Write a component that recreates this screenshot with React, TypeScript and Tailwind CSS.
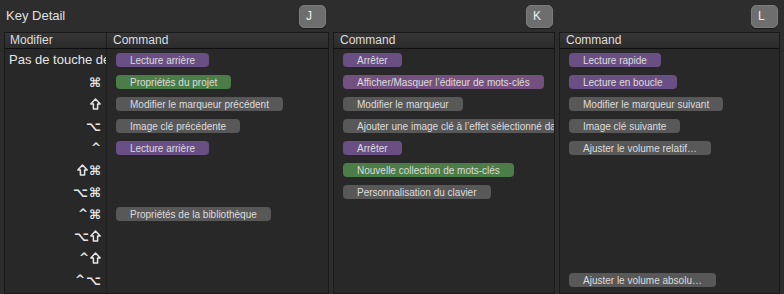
import React from 'react';

type Cmd = { row: number; label: string; color: 'purple' | 'green' | 'gray' | 'pink' };

const pillColor = {
    purple: 'bg-[#6a4f85]',
    pink: 'bg-[#74507f]',
    green: 'bg-[#4b7d48]',
    gray: 'bg-[#585858]',
};

const modifiers = ['Pas de touche de modification', '⌘', '⇧', '⌥', '^', '⇧⌘', '⌥⌘', '^⌘', '⌥⇧', '^⇧', '^⌥'];

const panels: { key: string; cmds: Cmd[]; withModifier?: boolean }[] = [
    {
        key: 'J',
        withModifier: true,
        cmds: [
            { row: 0, label: 'Lecture arrière', color: 'purple' },
            { row: 1, label: 'Propriétés du projet', color: 'green' },
            { row: 2, label: 'Modifier le marqueur précédent', color: 'gray' },
            { row: 3, label: 'Image clé précédente', color: 'gray' },
            { row: 4, label: 'Lecture arrière', color: 'purple' },
            { row: 7, label: 'Propriétés de la bibliothèque', color: 'gray' },
        ],
    },
    {
        key: 'K',
        cmds: [
            { row: 0, label: 'Arrêter', color: 'purple' },
            { row: 1, label: 'Afficher/Masquer l’éditeur de mots-clés', color: 'pink' },
            { row: 2, label: 'Modifier le marqueur', color: 'gray' },
            { row: 3, label: 'Ajouter une image clé à l’effet sélectionné dans le visualiseur', color: 'gray' },
            { row: 4, label: 'Arrêter', color: 'purple' },
            { row: 5, label: 'Nouvelle collection de mots-clés', color: 'green' },
            { row: 6, label: 'Personnalisation du clavier', color: 'gray' },
        ],
    },
    {
        key: 'L',
        cmds: [
            { row: 0, label: 'Lecture rapide', color: 'purple' },
            { row: 1, label: 'Lecture en boucle', color: 'purple' },
            { row: 2, label: 'Modifier le marqueur suivant', color: 'gray' },
            { row: 3, label: 'Image clé suivante', color: 'gray' },
            { row: 4, label: 'Ajuster le volume relatif…', color: 'gray' },
            { row: 10, label: 'Ajuster le volume absolu…', color: 'gray' },
        ],
    },
];

const rows = Array.from({ length: 11 }, (_, i) => i);

const KeyCap: React.FC<{ k: string }> = ({ k }) => (
    <div className="w-[27px] h-[23px] rounded-[5px] bg-[#6e6e6e] border border-[#7c7c7c] flex items-center pl-[6px] text-[12px] text-[#eee] shadow-[0_1px_0_#1a1a1a]">
        {k}
    </div>
);

// macOS shift key: outlined house-shaped arrow
const ShiftIcon = () => (
    <svg width="11" height="12" viewBox="0 0 11 12" className="shrink-0">
        <path
            d="M5.5 1 L10.2 6 L7.6 6 L7.6 11 L3.4 11 L3.4 6 L0.8 6 Z"
            fill="none"
            stroke="#e6e6e6"
            strokeWidth="1.5"
            strokeLinejoin="round"
        />
    </svg>
);

const Mods: React.FC<{ m: string }> = ({ m }) => (
    <span className="flex items-center gap-[1px]">
        {Array.from(m).map((ch, i) =>
            ch === '⇧' ? (
                <ShiftIcon key={i} />
            ) : ch === '^' ? (
                <span key={i} className="text-[12px] leading-none">
                    ^
                </span>
            ) : (
                <span key={i} className="leading-none">
                    {ch}
                </span>
            )
        )}
    </span>
);

const Panel: React.FC<{ cmds: Cmd[]; withModifier?: boolean; width: string }> = ({ cmds, withModifier, width }) => (
    <div className={`${width} h-full flex flex-col border border-[#191919] bg-[#282828] overflow-hidden`}>
        <div className="h-[16px] flex bg-gradient-to-b from-[#363636] to-[#2b2b2b] border-b border-[#0f0f0f] text-[12px] leading-[15px] text-[#dedede]">
            {withModifier && <div className="w-[102px] pl-[5px] border-r border-[#1c1c1c]">Modifier</div>}
            <div className="flex-1 pl-[6px]">Command</div>
        </div>
        <div className="flex-1 flex">
            {withModifier && (
                <div className="w-[102px] border-r border-[#1f1f1f] flex flex-col overflow-hidden">
                    {modifiers.map((m, i) =>
                        i === 0 ? (
                            <div key={i} className="h-[22px] shrink-0 flex items-center whitespace-nowrap overflow-hidden pl-[4px] text-[13px] text-[#e6e6e6]">
                                {m}
                            </div>
                        ) : (
                            <div
                                key={i}
                                className="h-[22px] shrink-0 flex items-center justify-end pr-[5px] text-[13px] font-bold text-[#e6e6e6] font-['DejaVu_Sans',sans-serif]"
                            >
                                <Mods m={m} />
                            </div>
                        )
                    )}
                </div>
            )}
            <div className="flex-1 flex flex-col overflow-hidden">
                {rows.map((r) => {
                    const c = cmds.find((x) => x.row === r);
                    return (
                        <div key={r} className="h-[22px] shrink-0 flex items-center pl-[9px] whitespace-nowrap">
                            {c && (
                                <div
                                    className={`${pillColor[c.color]} h-[14px] rounded-[4px] px-[14px] flex items-center text-[10px] text-[#dcdcdc] shrink-0`}
                                >
                                    {c.label}
                                </div>
                            )}
                        </div>
                    );
                })}
            </div>
        </div>
    </div>
);

export default function App() {
    return (
        <div className="w-[784px] h-[294px] bg-[#2d2d2d] flex flex-col font-['Liberation_Sans',Arial,sans-serif] overflow-hidden">
            <div className="h-[32px] flex shrink-0">
                <div className="w-[329px] flex items-center justify-between pl-[6px] pr-[3px]">
                    <span className="text-[13px] text-[#e0e0e0]">Key Detail</span>
                    <KeyCap k="J" />
                </div>
                <div className="w-[226px] flex items-center justify-end pr-[2px]">
                    <KeyCap k="K" />
                </div>
                <div className="w-[224px] flex items-center justify-end pr-[1px]">
                    <KeyCap k="L" />
                </div>
            </div>
            <div className="flex-1 flex gap-[4px] pl-[4px] min-h-0">
                <Panel width="w-[325px]" withModifier cmds={panels[0].cmds} />
                <Panel width="w-[222px]" cmds={panels[1].cmds} />
                <Panel width="w-[221px]" cmds={panels[2].cmds} />
            </div>
        </div>
    );
}
